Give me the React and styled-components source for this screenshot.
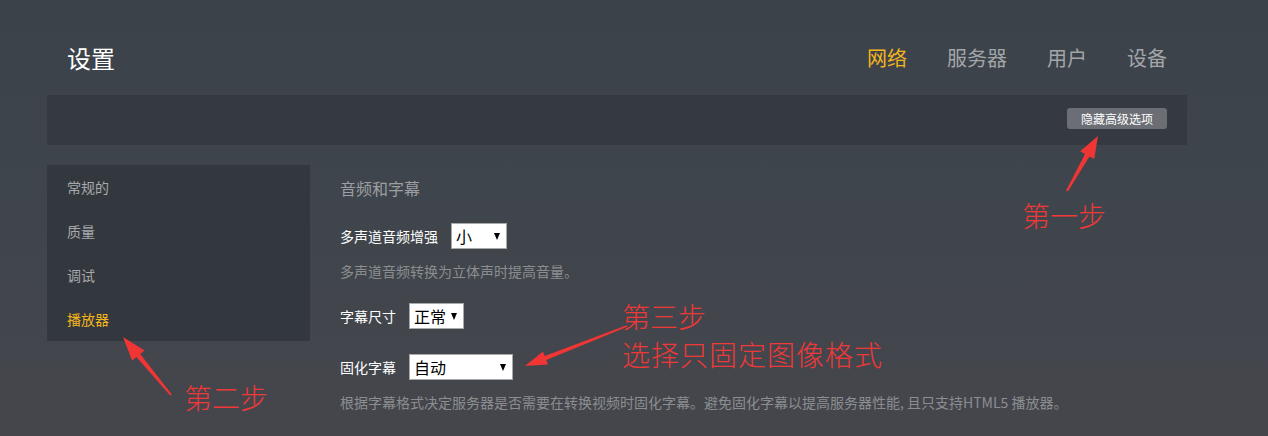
import React from "react";
import styled, { createGlobalStyle } from "styled-components";

const Global = createGlobalStyle`
  html, body { margin: 0; padding: 0; }
  body {
    font-family: "Noto Sans CJK SC", "Noto Sans", sans-serif;
    background: #3d434a;
  }
`;

const Page = styled.div`
  position: relative;
  width: 1268px;
  height: 436px;
  overflow: hidden;
  padding-left: 47px;
  box-sizing: border-box;
  background: linear-gradient(180deg, #3b424a 0%, #3f454c 45%, #45464c 100%);
`;

const Container = styled.div`
  width: 1140px;
`;

const Header = styled.header`
  height: 95px;
  box-sizing: border-box;
  padding: 20px 20px 0 20px;
  display: flex;
  align-items: center;
  justify-content: space-between;
`;

const Title = styled.h1`
  margin: 0;
  font-size: 24px;
  line-height: 32px;
  font-weight: 400;
  color: #ffffff;
`;

const Nav = styled.nav`
  display: flex;
  gap: 40px;
`;

const NavItem = styled.span`
  font-size: 20px;
  line-height: 28px;
  color: ${(p) => (p.$active ? "#f4b51c" : "#a3a6a9")};
`;

const Bar = styled.div`
  height: 50px;
  box-sizing: border-box;
  background: #343a40;
  display: flex;
  justify-content: flex-end;
  align-items: flex-start;
  padding: 13px 20px 0 0;
`;

const Button = styled.button`
  width: 100px;
  height: 21px;
  border: none;
  border-radius: 3px;
  background: #6b6e75;
  color: #ffffff;
  font-family: inherit;
  font-size: 12px;
  line-height: 21px;
  padding: 0;
  cursor: pointer;
`;

const Main = styled.div`
  margin-top: 20px;
  display: flex;
  align-items: flex-start;
`;

const Sidebar = styled.ul`
  list-style: none;
  margin: 0;
  padding: 0;
  width: 263px;
  background: #33383e;
`;

const SideItem = styled.li`
  height: 44px;
  display: flex;
  align-items: center;
  padding-left: 20px;
  font-size: 14px;
  color: ${(p) => (p.$active ? "#f4b51c" : "#a7a9ac")};
`;

const Content = styled.section`
  padding: 12px 0 0 30px;
`;

const Heading = styled.h2`
  margin: 0;
  font-size: 16px;
  line-height: 22px;
  font-weight: 400;
  color: #9c9ea1;
`;

const Row = styled.div`
  margin-top: ${(p) => p.$mt}px;
  display: flex;
  align-items: center;
  gap: 13px;
`;

const Label = styled.label`
  font-size: 14px;
  line-height: 26px;
  color: #ffffff;
`;

const Select = styled.div`
  position: relative;
  width: ${(p) => p.$w}px;
  height: 26px;
  box-sizing: border-box;
  border: 1px solid #a9a9a9;
  background: #ffffff;
  color: #000;
  font-size: 16px;
  line-height: 24px;
  padding-left: 4px;
  &::after {
    content: "";
    position: absolute;
    right: 6px;
    top: 9px;
    border-left: 3.5px solid transparent;
    border-right: 3.5px solid transparent;
    border-top: 7px solid #000;
  }
`;

const Help = styled.p`
  margin: ${(p) => p.$mt}px 0 0 0;
  font-size: 14px;
  line-height: 20px;
  color: #8b8e91;
`;

const Overlay = styled.svg`
  position: absolute;
  left: 0;
  top: 0;
  pointer-events: none;
`;

const Note = styled.div`
  position: absolute;
  left: ${(p) => p.$x}px;
  top: ${(p) => p.$y}px;
  font-size: 28px;
  line-height: 38px;
  font-weight: 300;
  color: #ef3838;
  white-space: nowrap;
`;

const NoteLine = styled.div`
  letter-spacing: ${(p) => p.$ls || 0}px;
`;

function arrowPoints(x1, y1, x2, y2, headLen, headHalf, tailW, baseW) {
  const dx = x2 - x1;
  const dy = y2 - y1;
  const len = Math.hypot(dx, dy);
  const ux = dx / len;
  const uy = dy / len;
  const nx = -uy;
  const ny = ux;
  const bx = x2 - ux * headLen;
  const by = y2 - uy * headLen;
  const pts = [
    [x1 + nx * tailW, y1 + ny * tailW],
    [bx + nx * baseW, by + ny * baseW],
    [bx + nx * headHalf, by + ny * headHalf],
    [x2, y2],
    [bx - nx * headHalf, by - ny * headHalf],
    [bx - nx * baseW, by - ny * baseW],
    [x1 - nx * tailW, y1 - ny * tailW],
  ];
  return pts.map((p) => p.map((v) => v.toFixed(1)).join(",")).join(" ");
}

export default function App() {
  return (
    <>
      <Global />
      <Page>
        <Container>
          <Header>
            <Title>设置</Title>
            <Nav>
              <NavItem $active>网络</NavItem>
              <NavItem>服务器</NavItem>
              <NavItem>用户</NavItem>
              <NavItem>设备</NavItem>
            </Nav>
          </Header>
          <Bar>
            <Button>隐藏高级选项</Button>
          </Bar>
          <Main>
            <Sidebar>
              <SideItem>常规的</SideItem>
              <SideItem>质量</SideItem>
              <SideItem>调试</SideItem>
              <SideItem $active>播放器</SideItem>
            </Sidebar>
            <Content>
              <Heading>音频和字幕</Heading>
              <Row $mt={24}>
                <Label>多声道音频增强</Label>
                <Select $w={56}>小</Select>
              </Row>
              <Help $mt={12}>多声道音频转换为立体声时提高音量。</Help>
              <Row $mt={22}>
                <Label>字幕尺寸</Label>
                <Select $w={55}>正常</Select>
              </Row>
              <Row $mt={25}>
                <Label>固化字幕</Label>
                <Select $w={104}>自动</Select>
              </Row>
              <Help $mt={12}>
                根据字幕格式决定服务器是否需要在转换视频时固化字幕。避免固化字幕以提高服务器性能, 且只支持HTML5 播放器。
              </Help>
            </Content>
          </Main>
        </Container>

        <Overlay width="1268" height="436" viewBox="0 0 1268 436">
          <polygon fill="#f03535" points={arrowPoints(1067, 191, 1098, 136, 22, 8, 1, 2.5)} />
          <polygon fill="#f03535" points={arrowPoints(171, 395, 123, 337, 24, 8, 1, 2.5)} />
          <polygon fill="#f03535" points={arrowPoints(627, 326, 525, 366, 22, 7, 0.8, 2.2)} />
        </Overlay>
        <Note $x={1022} $y={196}>
          <NoteLine $ls={0}>第一步</NoteLine>
        </Note>
        <Note $x={184} $y={378}>
          <NoteLine $ls={0}>第二步</NoteLine>
        </Note>
        <Note $x={622} $y={297}>
          <NoteLine $ls={0}>第三步</NoteLine>
          <NoteLine $ls={1}>选择只固定图像格式</NoteLine>
        </Note>
      </Page>
    </>
  );
}
